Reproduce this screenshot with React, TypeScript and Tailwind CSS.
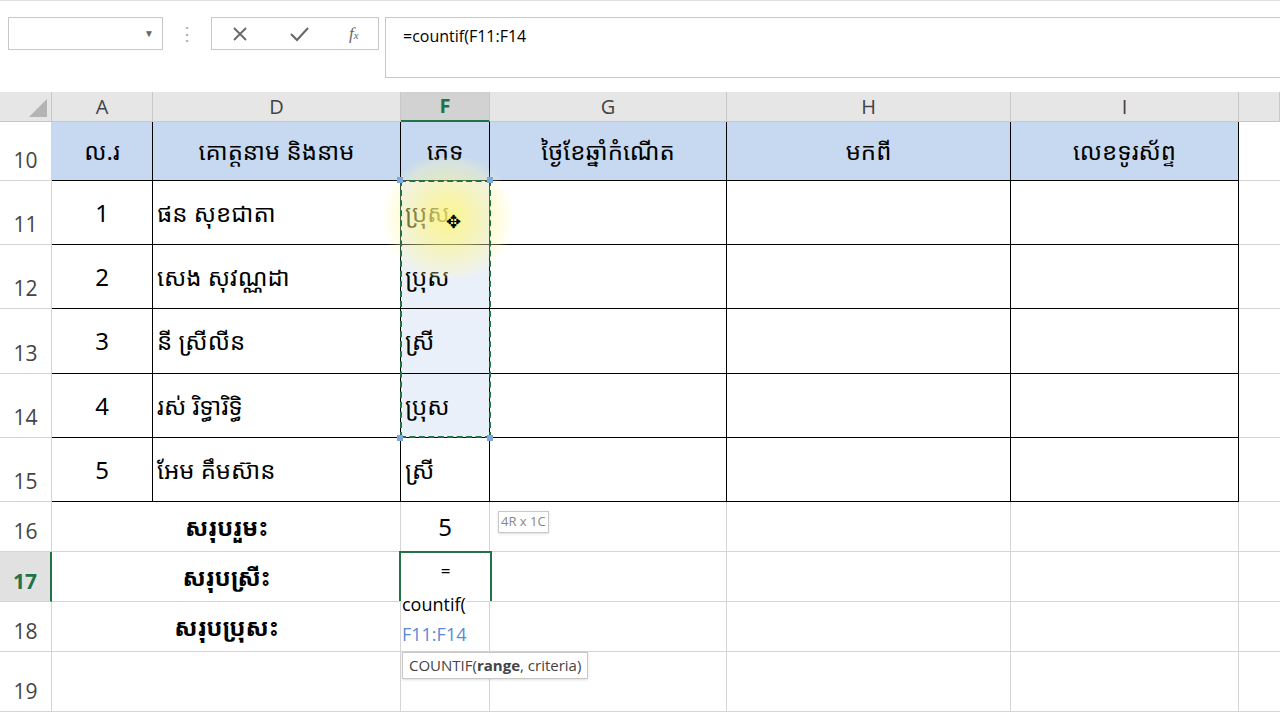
import React from "react";

const cols = ["A", "D", "F", "G", "H", "I", ""];
const rowsH = [59, 64, 64, 65, 64, 64, 50, 50, 50, 60];
const rowNums = [10, 11, 12, 13, 14, 15, 16, 17, 18, 19];
const header = ["ល.រ", "គោត្តនាម និងនាម", "ភេទ", "ថ្ងៃខែឆ្នាំកំណើត", "មកពី", "លេខទូរស័ព្ទ"];
const data = [
  ["1", "ផន សុខជាតា", "ប្រុស"],
  ["2", "សេង សុវណ្ណដា", "ប្រុស"],
  ["3", "នី ស្រីលីន", "ស្រី"],
  ["4", "រស់ រិទ្ធារិទ្ធិ", "ប្រុស"],
  ["5", "អែម គឹមស៊ាន", "ស្រី"],
];
const totals = ["សរុបរួមះ", "សរុបស្រីះ", "សរុបប្រុសះ"];
const kh = { fontFamily: '"Noto Sans Khmer","Khmer OS","Noto Sans","DejaVu Sans",sans-serif' };

export default function App() {
  const cells: React.ReactNode[] = [];
  rowNums.forEach((rn, ri) => {
    const h = rowsH[ri];
    const sel = rn === 17;
    cells.push(
      <div key={"h" + rn} style={{ height: h }} className={`flex items-end pb-1 justify-center text-[21px] border-r border-b border-[#d4d4d4] ${sel ? "bg-[#e1e1e1] text-[#217346] font-bold border-r-2 border-r-[#217346]" : "bg-white text-[#444]"}`}>{rn}</div>
    );
    for (let c = 0; c < 7; c++) {
      const inTable = ri <= 5 && c < 6;
      let content: React.ReactNode = null;
      let cls = "border-r border-b border-[#d4d4d4]";
      let align = "justify-center";
      if (inTable) {
        cls = "border-r border-b border-black";
        if (ri === 0) {
          cls += " bg-[#c6d9f1]";
          content = header[c];
        } else {
          const d = data[ri - 1];
          if (c < 3) content = d[c];
          if (c === 1 || c === 2) align = "justify-start pl-1";
          if (c === 2 && ri <= 4) cls += " bg-[#eaf0fa]";
        }
      }
      if (c === 6) cls = "border-b border-[#d4d4d4]";
      if (ri >= 6 && c === 0) cls = "border-b border-[#d4d4d4]";
      if (ri >= 6 && ri <= 8 && c === 1) {
        content = <span className="font-bold relative -left-[50px]">{totals[ri - 6]}</span>;
      }
      if (ri === 6 && c === 2) content = "5";
      cells.push(
        <div key={rn + "-" + c} style={{ height: h, ...kh }} className={`flex items-center ${align} text-[24px] text-black ${cls}`}>{content}</div>
      );
    }
  });

  return (
    <div className="w-[1280px] h-[720px] bg-white relative overflow-hidden" style={{ fontFamily: '"Open Sans","Liberation Sans",sans-serif' }}>
      <div className="h-[92px] border-t border-[#e0e0e0] bg-white flex items-start pt-[16px] pl-[8px]">
        <div className="w-[155px] h-[33px] border border-[#c8c8c8] flex items-center justify-end pr-2 text-[#666] text-[10px]">▼</div>
        <div className="w-[48px] text-center text-[#aaa] text-lg leading-[33px]">⋮</div>
        <div className="w-[168px] h-[33px] border border-[#c8c8c8] flex items-center justify-around text-[#777]">
          <svg width="18" height="18" viewBox="0 0 18 18"><path d="M3 3L15 15M15 3L3 15" stroke="#666" strokeWidth="1.8" /></svg>
          <svg width="22" height="18" viewBox="0 0 22 18"><path d="M3 9L9 15L20 3" stroke="#666" strokeWidth="2" fill="none" /></svg>
          <span className="italic text-[17px] text-[#666]" style={{ fontFamily: '"Liberation Serif",serif' }}>f<span className="text-[11px]">x</span></span>
        </div>
        <div className="ml-[6px] flex-1 h-[61px] border border-[#c8c8c8] border-r-0 px-[17px] pt-[6px] text-[16px] text-black">=countif(F11:F14</div>
      </div>
      <div className="grid grid-cols-[52px_101px_248px_89px_237px_284px_228px_41px]">
        <div className="h-[30px] bg-[#e6e6e6] border-r border-b border-[#c8c8c8] flex items-end justify-end p-1">
          <div className="w-0 h-0 border-l-[18px] border-l-transparent border-b-[18px] border-b-[#b4b4b4]" />
        </div>
        {cols.map((c, i) => (
          <div key={i} className={`h-[30px] flex items-center justify-center text-[20px] border-r border-b ${c === "F" ? "bg-[#d2d2d2] text-[#217346] font-bold border-b-2 border-b-[#217346] border-[#c8c8c8]" : "bg-[#e6e6e6] text-[#444] border-[#c8c8c8]"}`}>{c}</div>
        ))}
        {cells}
      </div>
      <div className="absolute left-[378px] top-[158px] w-[140px] h-[120px] rounded-full bg-[radial-gradient(circle,rgba(255,245,120,0.85),rgba(255,250,180,0.3)_60%,transparent_72%)] pointer-events-none" />
      <div className="absolute left-[400px] top-[180px] w-[91px] h-[258px] border-2 border-dashed border-[#217346]" />
      <div className="absolute left-[397px] top-[177px] w-[6px] h-[6px] bg-[#7ea6e0]" />
      <div className="absolute left-[487px] top-[177px] w-[6px] h-[6px] bg-[#7ea6e0]" />
      <div className="absolute left-[397px] top-[435px] w-[6px] h-[6px] bg-[#7ea6e0]" />
      <div className="absolute left-[487px] top-[435px] w-[6px] h-[6px] bg-[#7ea6e0]" />
      <div className="absolute left-[446px] top-[208px] text-[18px]">✥</div>
      <div className="absolute left-[498px] top-[511px] border border-[#c8c8c8] bg-white text-[13px] text-[#888] px-[2px] shadow-sm">4R x 1C</div>
      <div className="absolute left-[399px] top-[551px] w-[93px] h-[50px] border-2 border-[#217346] border-b-0 bg-white" />
      <div className="absolute left-[400px] top-[553px] w-[91px] text-center text-[17px] leading-[36px]">=</div>
      <div className="absolute left-[402px] top-[590px] text-[18px] bg-white leading-[28px]">countif(</div>
      <div className="absolute left-[402px] top-[620px] text-[18px] text-[#5b8ad6] leading-[28px]">F11:F14</div>
      <div className="absolute left-[402px] top-[652px] border border-[#c8c8c8] bg-white text-[15px] text-[#444] px-[6px] py-[1px] shadow">COUNTIF(<b>range</b>, criteria)</div>
    </div>
  );
}
